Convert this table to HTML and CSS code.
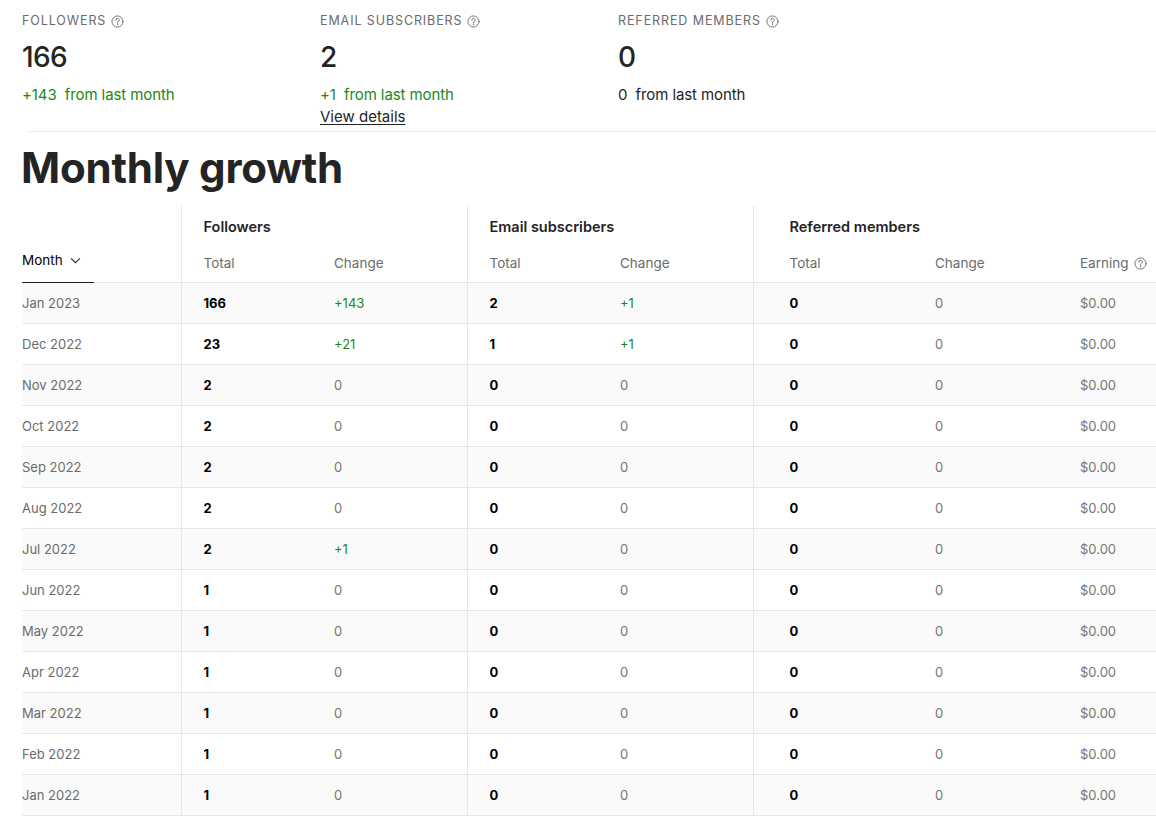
FILE: index.html
```html
<!DOCTYPE html>
<html>
<head>
<meta charset="utf-8">
<link rel="stylesheet" href="styles.css">
</head>
<body>
<div class="stats">
  <div class="stat">
    <div class="label">Followers <svg class="q" viewBox="0 0 14 14"><circle cx="7" cy="7" r="6"/><path d="M5.1 5.5a1.9 1.9 0 1 1 2.7 1.7c-.5.3-.8.6-.8 1.2v.6"/><circle class="dot" cx="7" cy="10.4" r=".7"/></svg></div>
    <div class="num">166</div>
    <div class="chg green">+143&nbsp; from last month</div>
  </div>
  <div class="stat">
    <div class="label">Email subscribers <svg class="q" viewBox="0 0 14 14"><circle cx="7" cy="7" r="6"/><path d="M5.1 5.5a1.9 1.9 0 1 1 2.7 1.7c-.5.3-.8.6-.8 1.2v.6"/><circle class="dot" cx="7" cy="10.4" r=".7"/></svg></div>
    <div class="num">2</div>
    <div class="chg green">+1&nbsp; from last month</div>
    <a class="details" href="#">View details</a>
  </div>
  <div class="stat">
    <div class="label">Referred members <svg class="q" viewBox="0 0 14 14"><circle cx="7" cy="7" r="6"/><path d="M5.1 5.5a1.9 1.9 0 1 1 2.7 1.7c-.5.3-.8.6-.8 1.2v.6"/><circle class="dot" cx="7" cy="10.4" r=".7"/></svg></div>
    <div class="num">0</div>
    <div class="chg">0&nbsp; from last month</div>
  </div>
</div>
<div class="sep"></div>
<h1 class="title">Monthly growth</h1>
<table class="growth">
  <colgroup>
    <col class="c-month"><col class="c-tot"><col class="c-chg"><col class="c-tot"><col class="c-chg"><col class="c-rtot"><col class="c-rchg"><col class="c-earn">
  </colgroup>
  <thead>
    <tr class="grp">
      <th rowspan="2" class="month-h"><span class="month-sort">Month <svg class="chev" viewBox="0 0 12 8"><path d="M1 1.5l5 5 5-5"/></svg></span></th>
      <th colspan="2" class="g">Followers</th>
      <th colspan="2" class="g">Email subscribers</th>
      <th colspan="3" class="g gr">Referred members</th>
    </tr>
    <tr class="sub">
      <th class="g">Total</th><th>Change</th>
      <th class="g">Total</th><th>Change</th>
      <th class="g gr">Total</th><th>Change</th>
      <th>Earning <svg class="q" viewBox="0 0 14 14"><circle cx="7" cy="7" r="6"/><path d="M5.1 5.5a1.9 1.9 0 1 1 2.7 1.7c-.5.3-.8.6-.8 1.2v.6"/><circle class="dot" cx="7" cy="10.4" r=".7"/></svg></th>
    </tr>
  </thead>
  <tbody>
    <tr><td class="m">Jan 2023</td><td class="g t">166</td><td class="green">+143</td><td class="g t">2</td><td class="green">+1</td><td class="g gr t">0</td><td>0</td><td>$0.00</td></tr>
    <tr><td class="m">Dec 2022</td><td class="g t">23</td><td class="green">+21</td><td class="g t">1</td><td class="green">+1</td><td class="g gr t">0</td><td>0</td><td>$0.00</td></tr>
    <tr><td class="m">Nov 2022</td><td class="g t">2</td><td>0</td><td class="g t">0</td><td>0</td><td class="g gr t">0</td><td>0</td><td>$0.00</td></tr>
    <tr><td class="m">Oct 2022</td><td class="g t">2</td><td>0</td><td class="g t">0</td><td>0</td><td class="g gr t">0</td><td>0</td><td>$0.00</td></tr>
    <tr><td class="m">Sep 2022</td><td class="g t">2</td><td>0</td><td class="g t">0</td><td>0</td><td class="g gr t">0</td><td>0</td><td>$0.00</td></tr>
    <tr><td class="m">Aug 2022</td><td class="g t">2</td><td>0</td><td class="g t">0</td><td>0</td><td class="g gr t">0</td><td>0</td><td>$0.00</td></tr>
    <tr><td class="m">Jul 2022</td><td class="g t">2</td><td class="green">+1</td><td class="g t">0</td><td>0</td><td class="g gr t">0</td><td>0</td><td>$0.00</td></tr>
    <tr><td class="m">Jun 2022</td><td class="g t">1</td><td>0</td><td class="g t">0</td><td>0</td><td class="g gr t">0</td><td>0</td><td>$0.00</td></tr>
    <tr><td class="m">May 2022</td><td class="g t">1</td><td>0</td><td class="g t">0</td><td>0</td><td class="g gr t">0</td><td>0</td><td>$0.00</td></tr>
    <tr><td class="m">Apr 2022</td><td class="g t">1</td><td>0</td><td class="g t">0</td><td>0</td><td class="g gr t">0</td><td>0</td><td>$0.00</td></tr>
    <tr><td class="m">Mar 2022</td><td class="g t">1</td><td>0</td><td class="g t">0</td><td>0</td><td class="g gr t">0</td><td>0</td><td>$0.00</td></tr>
    <tr><td class="m">Feb 2022</td><td class="g t">1</td><td>0</td><td class="g t">0</td><td>0</td><td class="g gr t">0</td><td>0</td><td>$0.00</td></tr>
    <tr><td class="m">Jan 2022</td><td class="g t">1</td><td>0</td><td class="g t">0</td><td>0</td><td class="g gr t">0</td><td>0</td><td>$0.00</td></tr>
  </tbody>
</table>
</body>
</html>
```
FILE: styles.css
```css
html, body {
  margin: 0;
  padding: 0;
  background: #fff;
  font-family: Inter, "Liberation Sans", sans-serif;
  color: #242424;
  overflow: hidden;
}
.stats {
  display: flex;
  padding: 11px 0 0 22px;
}
.stat {
  width: 298px;
  display: flex;
  flex-direction: column;
  align-items: flex-start;
}
.label {
  font-size: 12.5px;
  line-height: 20px;
  letter-spacing: 0.9px;
  text-transform: uppercase;
  color: #6b6b6b;
  display: flex;
  align-items: center;
  gap: 5px;
}
.q {
  width: 13px;
  height: 13px;
  fill: none;
  stroke: #6b6b6b;
  stroke-width: 1;
  stroke-linecap: round;
}
.q .dot {
  fill: #6b6b6b;
  stroke: none;
}
.num {
  margin-top: 6px;
  font-size: 28px;
  line-height: 40px;
  font-weight: 500;
  letter-spacing: -0.6px;
  color: #242424;
}
.chg {
  margin-top: 7px;
  font-size: 15px;
  line-height: 22px;
  color: #242424;
  letter-spacing: -0.1px;
}
.green { color: #1a8917; }
.details {
  font-size: 15px;
  line-height: 22px;
  color: #242424;
  text-decoration: underline;
  text-underline-offset: 2px;
}
.sep {
  margin: 3px 0 0 29px;
  height: 1px;
  background: #e6e6e6;
}
.title {
  margin: 10px 0 0 21px;
  font-size: 42px;
  line-height: 52px;
  font-weight: 700;
  letter-spacing: -0.2px;
  color: #242424;
}
.growth {
  margin: 12px 0 0 22px;
  width: 1134px;
  table-layout: fixed;
  border-collapse: collapse;
  font-size: 13px;
}
.c-month { width: 159px; }
.c-tot { width: 153px; }
.c-chg { width: 133px; }
.c-rtot { width: 182px; }
.c-rchg { width: 145px; }
.c-earn { width: 76px; }
.growth th, .growth td {
  padding: 0;
  text-align: left;
  white-space: nowrap;
}
.growth .g { border-left: 1px solid #e6e6e6; padding-left: 22px; }
.growth .gr { padding-left: 36px; }
.grp th {
  height: 39px;
  font-size: 14.5px;
  font-weight: 600;
  color: #242424;
  vertical-align: middle;
  padding-top: 1px;
}
.grp th.month-h { padding-top: 0; }
.sub th {
  height: 33px;
  font-size: 13.5px;
  font-weight: 400;
  color: #6b6b6b;
  vertical-align: middle;
  padding-bottom: 3px;
  border-bottom: 1px solid #e6e6e6;
}
.sub th .q { vertical-align: -2px; margin-left: 2px; }
.growth .month-h {
  vertical-align: bottom;
  border-bottom: 1px solid #e6e6e6;
  padding: 0;
}
.month-sort {
  display: inline-flex;
  align-items: center;
  gap: 7px;
  width: 72px;
  box-sizing: border-box;
  line-height: 20px;
  padding-bottom: 12px;
  border-bottom: 1px solid #242424;
  font-size: 13.5px;
  font-weight: 400;
  color: #000;
  margin-bottom: -1px;
}
.chev {
  width: 11px;
  height: 7px;
  fill: none;
  stroke: #242424;
  stroke-width: 1.2;
}
.growth tbody td {
  height: 40px;
  border-bottom: 1px solid #e6e6e6;
  color: #757575;
  vertical-align: middle;
}
.growth tbody tr:nth-child(odd) { background: #fafafa; }
.growth tbody td.m { color: #6b6b6b; }
.growth tbody td.t { color: #000; font-weight: 700; }
.growth tbody td.green { color: #1a8917; }
```
